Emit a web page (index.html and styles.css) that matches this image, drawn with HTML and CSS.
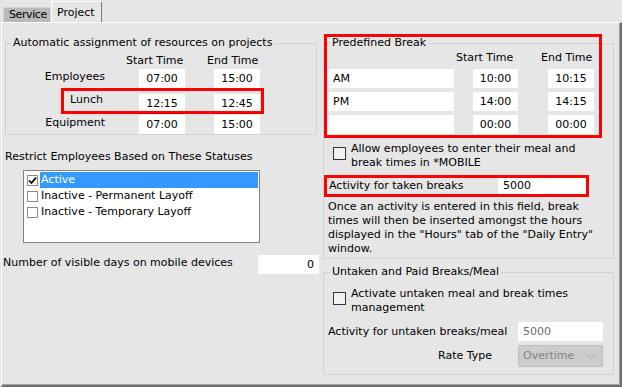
FILE: index.html
```html
<!DOCTYPE html>
<html lang="en">

<head>
    <meta charset="UTF-8">
    <title>Project Settings</title>
    <link rel="stylesheet" href="styles.css">
</head>

<body>
    <div class="tabs">
        <div class="tab tab-service">Service</div>
        <div class="tab tab-project">Project</div>
    </div>
    <div class="panel">
        <div class="col-left">
            <fieldset class="group group-auto">
                <legend>Automatic assignment of resources on projects</legend>
                <div class="time-head">
                    <span class="head-start">Start Time</span>
                    <span>End Time</span>
                </div>
                <div class="time-row">
                    <span class="row-label">Employees</span>
                    <span class="field time">07:00</span>
                    <span class="field time">15:00</span>
                </div>
                <div class="time-row lunch">
                    <span class="row-label">Lunch</span>
                    <span class="field time">12:15</span>
                    <span class="field time">12:45</span>
                </div>
                <div class="time-row equip">
                    <span class="row-label">Equipment</span>
                    <span class="field time">07:00</span>
                    <span class="field time">15:00</span>
                </div>
            </fieldset>

            <div class="status-title">Restrict Employees Based on These Statuses</div>
            <div class="listbox">
                <div class="item selected">
                    <span class="box">
                        <svg width="9" height="9" viewBox="0 0 9 9"><path d="M1 4.5 L3.4 7 L8 1.6" fill="none" stroke="#000" stroke-width="1.7"/></svg>
                    </span>
                    <span class="text">Active</span>
                </div>
                <div class="item">
                    <span class="box"></span>
                    <span class="text">Inactive - Permanent Layoff</span>
                </div>
                <div class="item">
                    <span class="box"></span>
                    <span class="text">Inactive - Temporary Layoff</span>
                </div>
            </div>

            <div class="days-row">
                <span class="days-label">Number of visible days on mobile devices</span>
                <span class="field num">0</span>
            </div>
        </div>

        <div class="col-right">
            <fieldset class="group group-break">
                <legend>Predefined Break</legend>
                <div class="break-head">
                    <span class="head-start">Start Time</span>
                    <span>End Time</span>
                </div>
                <div class="break-rows">
                    <div class="break-row">
                        <span class="field name">AM</span>
                        <span class="field time t-start">10:00</span>
                        <span class="field time t-end">10:15</span>
                    </div>
                    <div class="break-row">
                        <span class="field name">PM</span>
                        <span class="field time t-start">14:00</span>
                        <span class="field time t-end">14:15</span>
                    </div>
                    <div class="break-row">
                        <span class="field name"></span>
                        <span class="field time t-start">00:00</span>
                        <span class="field time t-end">00:00</span>
                    </div>
                </div>
                <div class="check-row">
                    <span class="check"></span>
                    <span>Allow employees to enter their meal and<br>break times in *MOBILE</span>
                </div>
                <div class="activity-row">
                    <span class="activity-label">Activity for taken breaks</span>
                    <span class="field activity">5000</span>
                </div>
                <p class="note">Once an activity is entered in this field, break<br>times will then be inserted amongst the hours<br>displayed in the "Hours" tab of the "Daily Entry"<br>window.</p>
            </fieldset>

            <fieldset class="group group-untaken">
                <legend>Untaken and Paid Breaks/Meal</legend>
                <div class="check-row">
                    <span class="check"></span>
                    <span>Activate untaken meal and break times<br>management</span>
                </div>
                <div class="untaken-row">
                    <span class="untaken-label">Activity for untaken breaks/meal</span>
                    <span class="field disabled">5000</span>
                </div>
                <div class="rate-row">
                    <span class="rate-label">Rate Type</span>
                    <span class="select">Overtime
                        <svg width="9" height="5" viewBox="0 0 9 5"><path d="M0.5 0.5 L4.5 4.5 L8.5 0.5" fill="none" stroke="#a8a8a8" stroke-width="1"/></svg>
                    </span>
                </div>
            </fieldset>
        </div>

        <!-- red annotation boxes -->
        <div class="mark mark-lunch"></div>
        <div class="mark mark-break"></div>
        <div class="mark mark-activity"></div>
    </div>
</body>

</html>
```

FILE: styles.css
```css
body {
    margin: 0;
    width: 622px;
    height: 387px;
    overflow: hidden;
    background: #e6e6e6;
    font-family: 'DejaVu Sans', Verdana, sans-serif;
    font-size: 11px;
    line-height: 14px;
    color: #000;
}

.tabs {
    display: flex;
    align-items: flex-end;
    height: 22px;
    padding-left: 3px;
}

.tab {
    box-sizing: border-box;
    line-height: 14px;
    white-space: nowrap;
}

.tab-service {
    width: 48px;
    height: 15px;
    padding-left: 5px;
    background: #b9b9b9;
    border: 1px solid #d4d4d4;
    border-bottom: none;
    letter-spacing: -0.4px;
}

.tab-project {
    width: 51px;
    height: 21px;
    padding: 4px 0 0 5px;
    border-top: 1px solid #fff;
    border-left: 1px solid #fff;
    border-right: 1px solid #7f7f7f;
}

.panel {
    position: relative;
    display: flex;
    box-sizing: border-box;
    width: 621px;
    height: 365px;
    margin-left: 1px;
    border-top: 1px solid #fff;
    border-left: 1px solid #fff;
    border-right: 2px solid #707070;
    border-bottom: 2px solid #707070;
    box-shadow: inset -1px -1px 0 #a0a0a0;
}

.col-left {
    width: 317px;
}

.col-right {
    width: 291px;
    margin-left: 4px;
}

fieldset.group {
    box-sizing: border-box;
    min-width: 0;
    margin: 13px 0 0;
    padding: 0;
    border: 1px solid #d2d2d2;
}

fieldset.group legend {
    padding: 0 2px;
    margin-left: 6px;
    line-height: 14px;
}

.group-auto {
    width: 312px;
    margin-left: 3px !important;
}

.group-auto legend {
    margin-left: 5px !important;
}

.field {
    box-sizing: border-box;
    height: 19px;
    line-height: 19px;
    background: #fff;
    white-space: nowrap;
}

.time {
    width: 46px;
    text-align: center;
}

/* automatic assignment */
.time-head {
    display: flex;
    padding-left: 120px;
    margin-top: 4px;
}

.time-head .head-start {
    width: 81px;
}

.time-row {
    display: flex;
    height: 19px;
    margin-top: 1px;
}

.time-row.lunch {
    margin-top: 6px;
}

.time-row.equip {
    margin-top: 2px;
}

.row-label {
    box-sizing: border-box;
    width: 133px;
    padding-right: 34px;
    text-align: right;
    line-height: 16px;
}

.lunch .row-label {
    padding-right: 36px;
    margin-top: -2px;
}

.time-row .time + .time {
    margin-left: 29px;
}

/* statuses */
.status-title {
    margin: 15px 0 0 3px;
}

.listbox {
    box-sizing: border-box;
    width: 237px;
    height: 73px;
    margin: 6px 0 0 21px;
    padding: 1px 1px 0 0;
    background: #fff;
    border: 1px solid #828282;
}

.item {
    display: flex;
    align-items: center;
    height: 16px;
    padding-left: 3px;
}

.item .box {
    display: flex;
    align-items: center;
    justify-content: center;
    box-sizing: border-box;
    width: 11px;
    height: 11px;
    margin-right: 2px;
    border: 1px solid #8c8c8c;
    background: #fff;
}

.item .text {
    flex: 1;
    padding-left: 1px;
    line-height: 16px;
}

.item.selected .text {
    background: #3399ff;
    color: #fff;
}

.days-row {
    display: flex;
    height: 19px;
    margin-top: 12px;
}

.days-label {
    margin-left: 1px;
    line-height: 16px;
}

.num {
    width: 61px;
    margin-left: auto;
    padding-right: 5px;
    text-align: right;
}

/* predefined break */
.break-head {
    display: flex;
    padding-left: 132px;
    margin-top: 1px;
}

.break-head .head-start {
    width: 85px;
}

.break-rows {
    display: flex;
    flex-direction: column;
    gap: 4px;
    margin-top: 4px;
}

.break-row {
    display: flex;
    padding-left: 4px;
}

.name {
    width: 126px;
    padding-left: 5px;
}

.t-start {
    width: 45px;
    margin-left: 19px;
}

.t-end {
    margin-left: 30px;
}

.check-row {
    display: flex;
    align-items: flex-start;
    margin-top: 8px;
    padding-left: 9px;
}

.check {
    flex: none;
    box-sizing: border-box;
    width: 13px;
    height: 13px;
    margin: 5px 5px 0 0;
    border: 1px solid #333;
    background: #f2f2f2;
}

.activity-row {
    display: flex;
    align-items: center;
    height: 17px;
    margin-top: 7px;
}

.activity-label {
    box-sizing: border-box;
    width: 174px;
    padding-left: 5px;
}

.activity {
    width: 88px;
    height: 17px;
    line-height: 17px;
    padding-left: 5px;
}

.note {
    margin: 6px 0 2px 4px;
}

/* untaken breaks */
.group-untaken {
    margin-top: 6px !important;
}

.untaken-row {
    display: flex;
    height: 19px;
    margin-top: 7px;
}

.untaken-label {
    box-sizing: border-box;
    width: 194px;
    padding-left: 4px;
    line-height: 19px;
}

.disabled {
    width: 85px;
    padding-left: 5px;
    color: #6d6d6d;
}

.rate-row {
    display: flex;
    height: 22px;
    margin: 4px 0 7px;
}

.rate-label {
    box-sizing: border-box;
    width: 194px;
    padding-left: 114px;
    line-height: 22px;
}

.select {
    display: flex;
    align-items: center;
    justify-content: space-between;
    box-sizing: border-box;
    width: 85px;
    height: 22px;
    padding: 0 6px 0 4px;
    background: #cccccc;
    border: 1px solid #bfbfbf;
    color: #838383;
}

/* annotations */
.mark {
    position: absolute;
    box-sizing: border-box;
    border: 3px solid #ff0000;
}

.mark-lunch {
    left: 59px;
    top: 65px;
    width: 203px;
    height: 26px;
}

.mark-break {
    left: 322px;
    top: 11px;
    width: 278px;
    height: 104px;
}

.mark-activity {
    left: 322px;
    top: 152px;
    width: 265px;
    height: 22px;
}
```
